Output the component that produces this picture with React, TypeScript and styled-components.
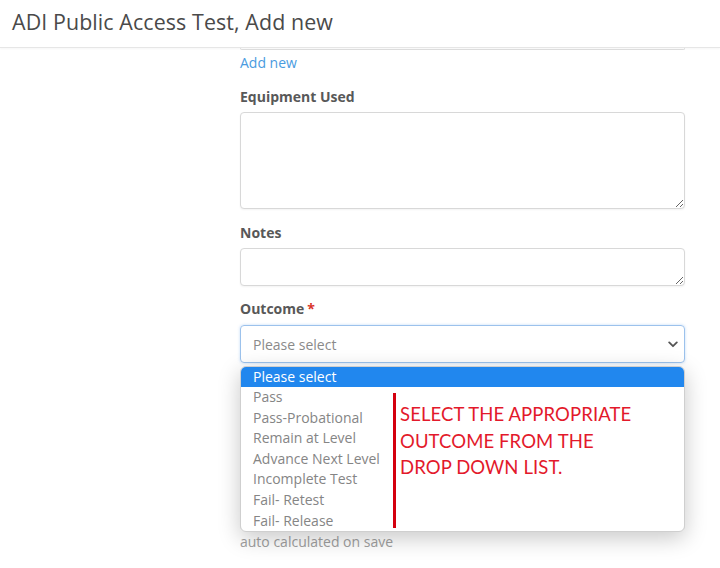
import React from "react";
import styled, { createGlobalStyle } from "styled-components";

const Global = createGlobalStyle`
  html, body { margin: 0; padding: 0; background: #ffffff; }
  body { font-family: "Open Sans", "Liberation Sans", sans-serif; overflow: hidden; }
  * { box-sizing: border-box; }
`;

const Page = styled.div`
  width: 720px;
  height: 568px;
  display: flex;
  flex-direction: column;
  background: #ffffff;
`;

const Header = styled.header`
  height: 48px;
  flex-shrink: 0;
  display: flex;
  align-items: center;
  padding: 0 0 4px 12px;
  border-bottom: 1px solid #e6e6e6;
  box-shadow: 0 1px 2px rgba(0, 0, 0, 0.04);
`;

const Title = styled.h1`
  margin: 0;
  font-size: 21.4px;
  font-weight: 400;
  color: #4a4a4a;
  letter-spacing: 0.1px;
`;

const Form = styled.div`
  margin-left: 240px;
  width: 445px;
  display: flex;
  flex-direction: column;
`;

const CutInput = styled.div`
  height: 2px;
  border: 1px solid #dcdcdc;
  border-top: none;
  border-radius: 0 0 4px 4px;
`;

const Link = styled.a`
  margin-top: 4px;
  font-size: 14px;
  line-height: 18px;
  color: #4a9be0;
  text-decoration: none;
`;

const Label = styled.label<{ $gap: number }>`
  margin-top: ${(p) => p.$gap}px;
  margin-bottom: 6px;
  font-size: 14px;
  line-height: 18px;
  font-weight: 700;
  color: #585858;
`;

const Required = styled.span`
  color: #d9342b;
  margin-left: 3px;
`;

const Area = styled.textarea<{ $h: number }>`
  display: block;
  width: 100%;
  height: ${(p) => p.$h}px;
  border: 1px solid #d8d8d8;
  border-radius: 4px;
  resize: vertical;
  font-family: inherit;
  font-size: 14px;
  background: #fff;
  box-shadow: 0 1px 2px rgba(0, 0, 0, 0.05);
`;

const SelectWrap = styled.div`
  position: relative;
  margin-top: 1px;
`;

const SelectBox = styled.div`
  height: 38px;
  border: 1px solid #9cc2ec;
  border-radius: 4px;
  box-shadow: 0 0 3px rgba(80, 150, 230, 0.35);
  display: flex;
  align-items: center;
  justify-content: space-between;
  padding: 0 6px 0 12px;
  font-size: 14px;
  color: #8a8a8a;
`;

const Dropdown = styled.ul`
  position: absolute;
  top: calc(100% + 3px);
  left: 0;
  right: 0;
  margin: 0;
  padding: 0;
  list-style: none;
  background: #fff;
  border: 1px solid #cfcfcf;
  border-radius: 6px;
  box-shadow: 0 6px 22px rgba(0, 0, 0, 0.22);
  z-index: 5;
  overflow: hidden;
`;

const Option = styled.li<{ $active?: boolean }>`
  height: ${(p) => (p.$active ? 20 : 20.6)}px;
  line-height: ${(p) => (p.$active ? 20 : 20.6)}px;
  padding-left: 12px;
  font-size: 14px;
  color: ${(p) => (p.$active ? "#ffffff" : "#858585")};
  background: ${(p) => (p.$active ? "#2187ee" : "transparent")};
`;

const Annotation = styled.div`
  position: absolute;
  left: 152px;
  top: 26px;
  height: 135px;
  border-left: 3px solid #d4000f;
  padding: 8px 0 0 4px;
  font-family: Lato, "Liberation Sans", sans-serif;
  font-size: 18.5px;
  line-height: 26.5px;
  color: #e3192b;
  letter-spacing: 0.1px;
  white-space: nowrap;
`;

const Covered = styled.div`
  margin-top: 15px;
  height: 152px;
  border: 1px solid #d8d8d8;
  border-radius: 4px;
`;

const Help = styled.div`
  margin-top: 3px;
  font-size: 14px;
  line-height: 18px;
  color: #a0a0a0;
`;

const Chevron = () => (
  <svg width="10" height="7" viewBox="0 0 10 7">
    <path d="M1.2 1.4 L5 5.2 L8.8 1.4" fill="none" stroke="#555" strokeWidth="1.8" strokeLinecap="round" strokeLinejoin="round" />
  </svg>
);

const options = [
  "Pass",
  "Pass-Probational",
  "Remain at Level",
  "Advance Next Level",
  "Incomplete Test",
  "Fail- Retest",
  "Fail- Release",
];

export default function App() {
  return (
    <Page>
      <Global />
      <Header>
        <Title>ADI Public Access Test, Add new</Title>
      </Header>
      <Form>
        <CutInput />
        <Link href="#">Add new</Link>
        <Label $gap={16}>Equipment Used</Label>
        <Area $h={97} />
        <Label $gap={15}>Notes</Label>
        <Area $h={38} />
        <Label $gap={14}>
          Outcome<Required>*</Required>
        </Label>
        <SelectWrap>
          <SelectBox>
            <span>Please select</span>
            <Chevron />
          </SelectBox>
          <Dropdown>
            <Option $active>Please select</Option>
            {options.map((o) => (
              <Option key={o}>{o}</Option>
            ))}
            <Annotation>
              SELECT THE APPROPRIATE
              <br />
              OUTCOME FROM THE
              <br />
              DROP DOWN LIST.
            </Annotation>
          </Dropdown>
        </SelectWrap>
        <Covered />
        <Help>auto calculated on save</Help>
      </Form>
    </Page>
  );
}
